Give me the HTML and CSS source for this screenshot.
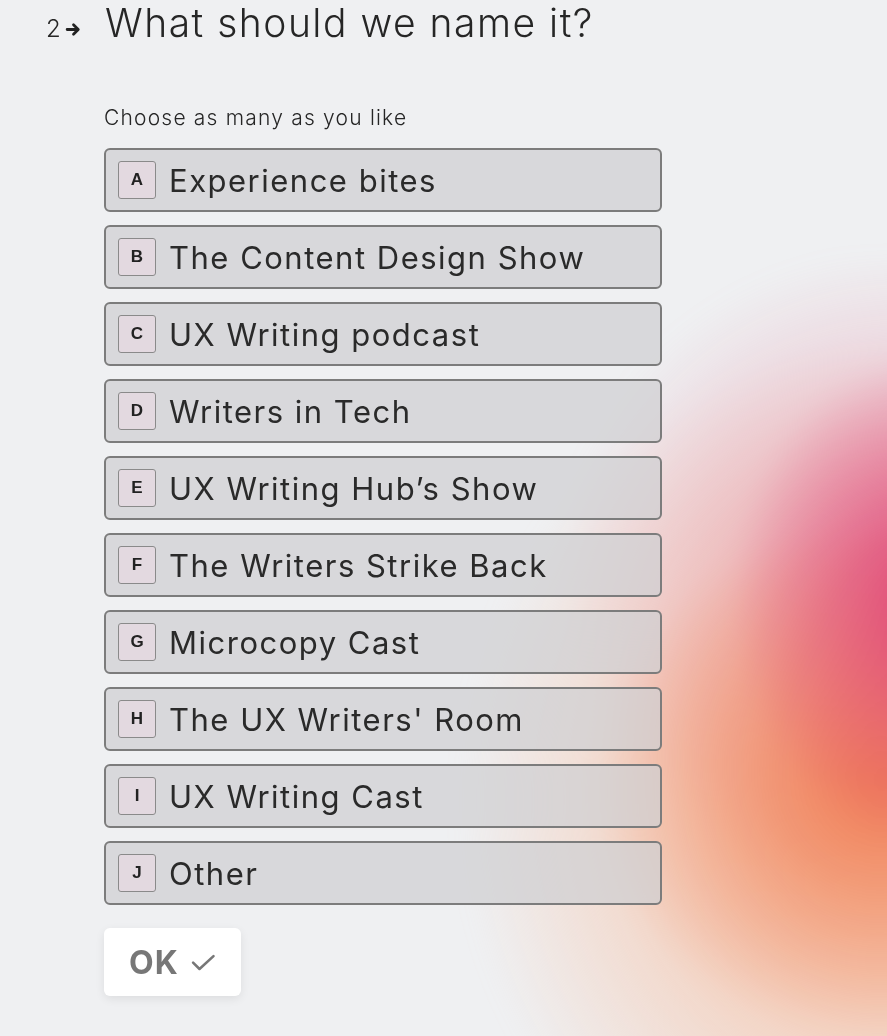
FILE: index.html
```html
<!DOCTYPE html>
<html lang="en">
<head>
  <meta charset="UTF-8" />
  <meta name="viewport" content="width=device-width, initial-scale=1.0"/>
  <title>What should we name it?</title>
  <link rel="stylesheet" href="styles.css">
</head>
<body>
  <div class="glow"></div>

  <main class="question">
    <h1 class="title">
      <span class="num">2<svg class="arrow" viewBox="0 0 16 16" width="17" height="17"><path d="M2 8h10M8 3.5L12.5 8 8 12.5" fill="none" stroke="#222" stroke-width="2.6" stroke-linecap="round" stroke-linejoin="round"/></svg></span>
      <span class="text">What should we name it?</span>
    </h1>

    <p class="hint">Choose as many as you like</p>

    <ul class="choices">
      <li class="choice"><span class="key">A</span><span class="label">Experience bites</span></li>
      <li class="choice"><span class="key">B</span><span class="label">The Content Design Show</span></li>
      <li class="choice"><span class="key">C</span><span class="label">UX Writing podcast</span></li>
      <li class="choice"><span class="key">D</span><span class="label">Writers in Tech</span></li>
      <li class="choice"><span class="key">E</span><span class="label">UX Writing Hub’s Show</span></li>
      <li class="choice"><span class="key">F</span><span class="label">The Writers Strike Back</span></li>
      <li class="choice"><span class="key">G</span><span class="label">Microcopy Cast</span></li>
      <li class="choice"><span class="key">H</span><span class="label">The UX Writers' Room</span></li>
      <li class="choice"><span class="key">I</span><span class="label">UX Writing Cast</span></li>
      <li class="choice"><span class="key">J</span><span class="label">Other</span></li>
    </ul>

    <button class="ok">OK <svg viewBox="0 0 24 24" width="28" height="28"><path d="M3.5 12.5l5.5 5.5L21 7" fill="none" stroke="#777" stroke-width="2.2" stroke-linecap="round" stroke-linejoin="round"/></svg></button>
  </main>
</body>
</html>
```

FILE: styles.css
```css
html, body {
  height: 100%;
}

body {
  margin: 0;
  font-family: Inter, "Open Sans", sans-serif;
  color: #262626;
  background: #eff0f2;
  overflow: hidden;
}

/* soft colour blob behind the form */
.glow {
  position: fixed;
  left: 380px;
  top: 260px;
  width: 1000px;
  height: 1000px;
  background:
    radial-gradient(ellipse 210px 250px at 560px 340px, rgba(222, 62, 116, 0.95), rgba(222, 62, 116, 0) 100%),
    radial-gradient(ellipse 290px 260px at 500px 520px, rgba(240, 126, 84, 0.95), rgba(240, 126, 84, 0) 100%),
    radial-gradient(ellipse 350px 320px at 530px 310px, rgba(228, 120, 150, 0.6), rgba(228, 120, 150, 0) 100%),
    radial-gradient(ellipse 420px 460px at 500px 540px, rgba(246, 178, 142, 0.95), rgba(246, 196, 170, 0.6) 55%, rgba(244, 220, 208, 0) 100%);
  filter: blur(12px);
  z-index: 0;
}

.question {
  position: relative;
  z-index: 1;
  padding: 0 0 0 46px;
}

.title {
  display: flex;
  align-items: baseline;
  margin: 0;
  padding-top: 1px;
  font-size: 39px;
  font-weight: 300;
  line-height: 44px;
  letter-spacing: 1.5px;
}

.num {
  display: flex;
  align-items: center;
  width: 59px;
  font-size: 24px;
  letter-spacing: 0;
  gap: 4px;
}

.arrow {
  display: block;
}

.hint {
  margin: 55px 0 18px 58px;
  font-size: 21px;
  font-weight: 300;
  line-height: 24px;
  letter-spacing: 1.2px;
}

.choices {
  list-style: none;
  margin: 0 0 0 58px;
  padding: 0;
  width: 558px;
  display: flex;
  flex-direction: column;
  gap: 13px;
}

.choice {
  display: flex;
  align-items: center;
  gap: 13px;
  height: 64px;
  box-sizing: border-box;
  padding: 0 12px;
  border: 2px solid #7c7c7c;
  border-radius: 6px;
  background: rgba(208, 208, 210, 0.74);
}

.key {
  display: flex;
  align-items: center;
  justify-content: center;
  width: 38px;
  height: 38px;
  box-sizing: border-box;
  border: 1px solid #8a8a8a;
  border-radius: 3px;
  background: #e3d9e0;
  font-family: "Liberation Sans", Arial, sans-serif;
  font-size: 17px;
  font-weight: 700;
  color: #222;
}

.label {
  font-size: 31px;
  font-weight: 400;
  letter-spacing: 1.5px;
  color: #2a2a2a;
}

.ok {
  display: flex;
  align-items: center;
  gap: 10px;
  margin: 23px 0 0 58px;
  height: 68px;
  padding: 0 24px 0 25px;
  border: none;
  border-radius: 6px;
  background: #fff;
  box-shadow: 0 3px 10px rgba(0, 0, 0, 0.08);
  font-family: inherit;
  font-size: 32px;
  font-weight: 700;
  letter-spacing: 1px;
  color: #777;
}
```
